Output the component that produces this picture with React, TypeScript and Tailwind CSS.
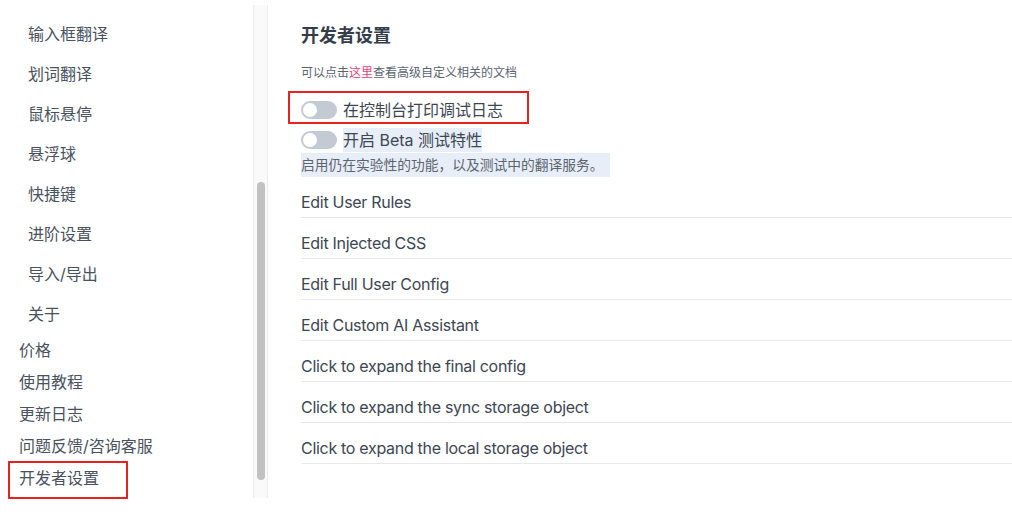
import React from 'react';

const font = { fontFamily: 'Inter, "Noto Sans CJK SC", sans-serif' };

const nested = ['输入框翻译', '划词翻译', '鼠标悬停', '悬浮球', '快捷键', '进阶设置', '导入/导出', '关于'];
const topLevel = ['价格', '使用教程', '更新日志', '问题反馈/咨询客服'];
const rows = [
  'Edit User Rules',
  'Edit Injected CSS',
  'Edit Full User Config',
  'Edit Custom AI Assistant',
  'Click to expand the final config',
  'Click to expand the sync storage object',
  'Click to expand the local storage object',
];

function Toggle() {
  return (
    <span className="flex h-[18px] w-[36px] shrink-0 items-center rounded-full bg-[#c3cad3] px-[2px]">
      <span className="h-[14px] w-[14px] rounded-full bg-white" />
    </span>
  );
}

export default function App() {
  return (
    <div className="flex h-[514px] w-[1012px] bg-white pt-[5px] text-[#49525f]" style={font}>
      {/* sidebar */}
      <nav className="flex h-[493px] w-[253px] shrink-0 flex-col pt-[9px] text-[16px]">
        {nested.map((n) => (
          <div key={n} className="py-[8px] pl-[28px] leading-[24px]">{n}</div>
        ))}
        {topLevel.map((n) => (
          <div key={n} className="py-[4px] pl-[19px] leading-[24px]">{n}</div>
        ))}
        <div className="relative py-[4px] pl-[19px] leading-[24px]">
          开发者设置
          <span className="absolute left-[8px] top-[-1px] h-[38px] w-[120px] border-2 border-[#e8231b]" />
        </div>
      </nav>

      {/* scrollbar */}
      <div className="flex h-[493px] w-[15px] shrink-0 flex-col items-center border-x border-[#ececec] bg-[#fafafa]">
        <div className="h-[177px]" />
        <div className="h-[298px] w-[8px] rounded-full bg-[#c1c1c1]" />
      </div>

      {/* main */}
      <main className="flex flex-1 flex-col pl-[33px] pt-[17px]">
        <h1 className="text-[18px] font-bold leading-[28px] text-[#343e4b]">开发者设置</h1>
        <p className="mt-[14px] text-[12px] leading-[18px] text-[#5b6470]">
          可以点击<span className="text-[#e0457b]">这里</span>查看高级自定义相关的文档
        </p>

        <div className="relative mt-[16px] flex h-[24px] items-center gap-[6px]">
          <Toggle />
          <span className="text-[16px] leading-[24px] text-[#3d4653]">在控制台打印调试日志</span>
          <span className="absolute left-[-13px] top-[-7px] h-[33px] w-[241px] border-2 border-[#e8231b]" />
        </div>

        <div className="mt-[6px] flex h-[24px] items-center gap-[6px]">
          <Toggle />
          <span className="bg-[#e7eef7] text-[16px] leading-[24px] text-[#3d4653]">开启 Beta 测试特性</span>
        </div>
        <div>
          <span className="inline-block bg-[#e7eef7] pr-[6px] text-[13.75px] leading-[24px] text-[#5b6470]">
            启用仍在实验性的功能，以及测试中的翻译服务。
          </span>
        </div>

        <div className="flex flex-col">
          {rows.map((r) => (
            <div key={r} className="border-b border-[#e8e8e8] pb-[3px] pt-[13px] text-[16px] leading-[24px] tracking-[-0.3px] text-[#3d4653]">
              {r}
            </div>
          ))}
        </div>
      </main>
    </div>
  );
}
